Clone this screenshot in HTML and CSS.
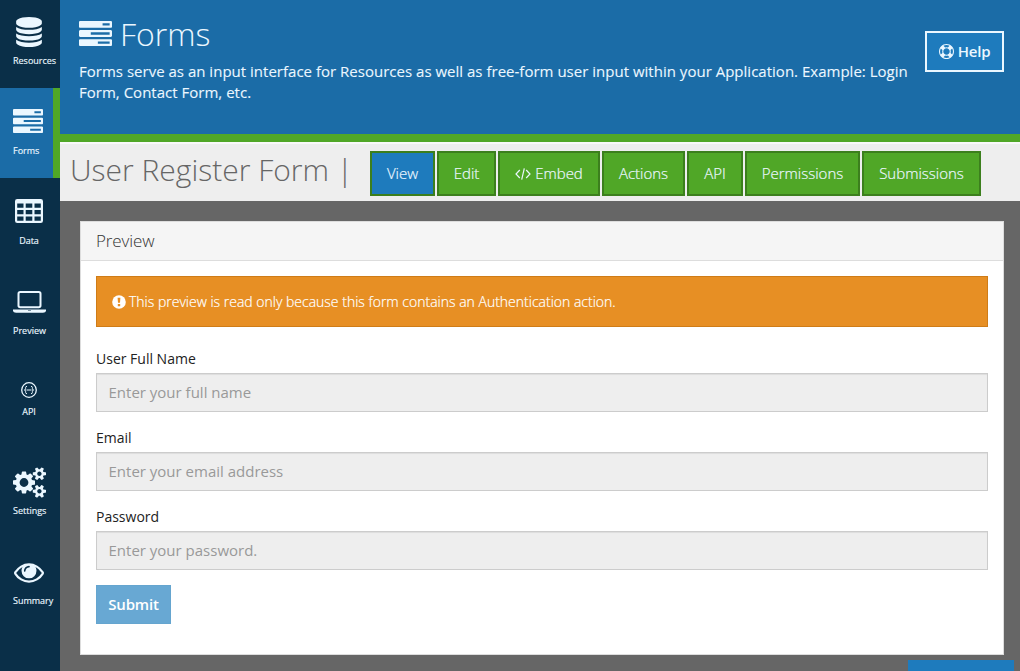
FILE: index.html
```html
<!DOCTYPE html>
<html lang="en">
<head>
<meta charset="utf-8">
<title>User Register Form</title>
<link rel="stylesheet" href="styles.css">
</head>
<body>
<svg class="defs" width="0" height="0">
  <symbol id="tasks" viewBox="0 128 1792 1408" preserveAspectRatio="none"><path d="M1024 1408h640v-128h-640v128zm-384-512h1024v-128h-1024v128zm640-512h384v-128h-384v128zm512 832v256q0 26-19 45t-45 19h-1664q-26 0-45-19t-19-45v-256q0-26 19-45t45-19h1664q26 0 45 19t19 45zm0-512v256q0 26-19 45t-45 19h-1664q-26 0-45-19t-19-45v-256q0-26 19-45t45-19h1664q26 0 45 19t19 45zm0-512v256q0 26-19 45t-45 19h-1664q-26 0-45-19t-19-45v-256q0-26 19-45t45-19h1664q26 0 45 19t19 45z"/></symbol>
</svg>
<div class="app">
  <nav class="sidebar">
    <a class="item">
      <span class="pic"><svg width="26" height="30" viewBox="0 0 1536 1792"><path d="M768 768q237 0 443-43t325-127v170q0 69-103 128t-280 93.5-385 34.5-385-34.5-280-93.5-103-128v-170q119 84 325 127t443 43zm0 768q237 0 443-43t325-127v170q0 69-103 128t-280 93.5-385 34.5-385-34.5-280-93.5-103-128v-170q119 84 325 127t443 43zm0-384q237 0 443-43t325-127v170q0 69-103 128t-280 93.5-385 34.5-385-34.5-280-93.5-103-128v-170q119 84 325 127t443 43zm0-1152q208 0 385 34.5t280 93.5 103 128v128q0 69-103 128t-280 93.5-385 34.5-385-34.5-280-93.5-103-128v-128q0-69 103-128t280-93.5 385-34.5z"/></svg></span>
      <span class="label">Resources</span>
    </a>
    <a class="item active">
      <span class="pic"><svg width="30" height="24"><use href="#tasks"/></svg></span>
      <span class="label">Forms</span>
    </a>
    <a class="item raised">
      <span class="pic"><svg width="28" height="24" viewBox="0 0 28 24"><path fill-rule="evenodd" d="M2.300 0H25.700A2.300 2.300 0 0 1 28 2.300V21.700A2.300 2.300 0 0 1 25.700 24H2.300A2.300 2.300 0 0 1 0 21.700V2.300A2.300 2.300 0 0 1 2.300 0ZM2.200 4.500V8.800H8.500V4.500ZM10.700 4.500V8.800H17.300V4.500ZM19.500 4.500V8.800H25.800V4.500ZM2.200 11V15.200H8.500V11ZM10.700 11V15.200H17.300V11ZM19.500 11V15.200H25.800V11ZM2.200 17.400V21.700H8.500V17.400ZM10.700 17.400V21.700H17.300V17.400ZM19.500 17.400V21.700H25.800V17.400Z"/></svg></span>
      <span class="label">Data</span>
    </a>
    <a class="item wide">
      <span class="pic"><svg width="33" height="22" viewBox="0 0 33 22"><path fill-rule="evenodd" d="M7.200 0H25.800A2.700 2.700 0 0 1 28.500 2.700V14.500A2.700 2.700 0 0 1 25.800 17.200H7.200A2.700 2.700 0 0 1 4.500 14.500V2.700A2.700 2.700 0 0 1 7.200 0ZM7.200 2A.7.700 0 0 0 6.500 2.700V14.500A.7.700 0 0 0 7.200 15.200H25.800A.7.700 0 0 0 26.500 14.500V2.700A.7.700 0 0 0 25.800 2ZM0 18.500H33V20Q32.600 21.800 30 21.800H3Q.4 21.800 0 20ZM15 19.500V20.100H18V19.500Z"/></svg></span>
      <span class="label">Preview</span>
    </a>
    <a class="item api">
      <span class="pic"><svg width="16" height="16" viewBox="0 0 16 16" fill="none" stroke="#ebf7ff"><circle cx="8" cy="8" r="7.300" stroke-width="1.300"/><path d="M6 4.300Q4.600 4.300 4.600 5.600V6.700Q4.600 8 3.400 8Q4.600 8 4.600 9.300V10.400Q4.600 11.700 6 11.700M10 4.300Q11.400 4.300 11.400 5.600V6.700Q11.400 8 12.600 8Q11.400 8 11.400 9.300V10.400Q11.400 11.700 10 11.700M5.500 8H10.500"/></svg></span>
      <span class="label">API</span>
    </a>
    <a class="item wide">
      <span class="pic"><svg width="33" height="31" viewBox="0 0 1920 1792"><path d="M896 896q0-106-75-181t-181-75-181 75-75 181 75 181 181 75 181-75 75-181zm768 512q0-52-38-90t-90-38-90 38-38 90q0 53 37.500 90.500t90.500 37.500 90.500-37.500 37.500-90.500zm0-1024q0-52-38-90t-90-38-90 38-38 90q0 53 37.500 90.500t90.500 37.500 90.500-37.500 37.500-90.500zm-384 421v185q0 10-7 19.500t-16 10.500l-155 24q-11 35-32 76 34 48 90 115 7 11 7 20 0 12-7 19-23 30-82.500 89.500t-78.500 59.500q-11 0-21-7l-115-90q-37 19-77 31-11 108-23 155-7 24-30 24h-186q-11 0-20-7.500t-10-17.500l-23-153q-34-10-75-31l-118 89q-7 7-20 7-11 0-21-8-144-133-144-160 0-9 7-19 10-14 41-53t47-61q-23-44-35-82l-152-24q-10-1-17-9.500t-7-19.500v-185q0-10 7-19.500t16-10.500l155-24q11-35 32-76-34-48-90-115-7-11-7-20 0-12 7-20 22-30 82-89t79-59q11 0 21 7l115 90q34-18 77-32 11-108 23-154 7-24 30-24h186q11 0 20 7.500t10 17.500l23 153q34 10 75 31l118-89q8-7 20-7 11 0 21 8 144 133 144 160 0 8-7 19-12 16-42 54t-45 60q23 48 34 82l152 23q10 2 17 10.500t7 19.500zm640 533v140q0 16-149 31-12 27-30 52 51 113 51 138 0 4-4 7-122 71-124 71-8 0-46-47t-52-68q-20 2-30 2t-30-2q-14 21-52 68t-46 47q-2 0-124-71-4-3-4-7 0-25 51-138-18-25-30-52-149-15-149-31v-140q0-16 149-31 13-29 30-52-51-113-51-138 0-4 4-7 4-2 35-20t59-34 30-16q8 0 46 46.500t52 67.500q20-2 30-2t30 2q51-71 92-112l6-2q4 0 124 70 4 3 4 7 0 25-51 138 17 23 30 52 149 15 149 31zm0-1024v140q0 16-149 31-12 27-30 52 51 113 51 138 0 4-4 7-122 71-124 71-8 0-46-47t-52-68q-20 2-30 2t-30-2q-14 21-52 68t-46 47q-2 0-124-71-4-3-4-7 0-25 51-138-18-25-30-52-149-15-149-31v-140q0-16 149-31 13-29 30-52-51-113-51-138 0-4 4-7 4-2 35-20t59-34 30-16q8 0 46 46.500t52 67.500q20-2 30-2t30 2q51-71 92-112l6-2q4 0 124 70 4 3 4 7 0 25-51 138 17 23 30 52 149 15 149 31z"/></svg></span>
      <span class="label">Settings</span>
    </a>
    <a class="item lowered">
      <span class="pic"><svg width="30" height="20" viewBox="0 384 1792 1152"><path d="M1664 960q-152-236-381-353 61 104 61 225 0 185-131.500 316.500t-316.500 131.500-316.500-131.500-131.500-316.500q0-121 61-225-229 117-381 353 133 205 333.500 326.500t434.500 121.500 434.500-121.500 333.500-326.500zm-720-384q0-20-14-34t-34-14q-125 0-214.500 89.500t-89.500 214.500q0 20 14 34t34 14 34-14 14-34q0-86 61-147t147-61q20 0 34-14t14-34zm848 384q0 34-20 69-140 230-376.500 368.500t-499.500 138.500-499.500-139-376.500-368q-20-35-20-69t20-69q140-229 376.500-368t499.500-139 499.500 139 376.500 368q20 35 20 69z"/></svg></span>
      <span class="label">Summary</span>
    </a>
  </nav>
  <main class="main">
    <header class="banner">
      <div class="intro">
        <h1 class="title"><svg class="title-icon" width="33" height="25"><use href="#tasks"/></svg><span>Forms</span></h1>
        <p class="lead">Forms serve as an input interface for Resources as well as free-form user input within your Application. Example: Login<br>Form, Contact Form, etc.</p>
      </div>
      <a class="help"><svg width="15" height="15" viewBox="0 0 1792 1792"><path d="M896 0q182 0 348 71t286 191 191 286 71 348-71 348-191 286-286 191-348 71-348-71-286-191-191-286-71-348 71-348 191-286 286-191 348-71zm0 128q-190 0-361 90l194 194q82-28 167-28t167 28l194-194q-171-90-361-90zm-678 1129l194-194q-28-82-28-167t28-167l-194-194q-90 171-90 361t90 361zm678 407q190 0 361-90l-194-194q-82 28-167 28t-167-28l-194 194q171 90 361 90zm0-384q159 0 271.500-112.500t112.500-271.500-112.500-271.500-271.500-112.500-271.500 112.500-112.500 271.500 112.500 271.500 271.500 112.500zm484-217l194 194q90-171 90-361t-90-361l-194 194q28 82 28 167t-28 167z"/></svg><span>Help</span></a>
    </header>
    <div class="toolbar">
      <h2 class="form-name">User Register Form |</h2>
      <div class="tabs">
        <a class="tab view">View</a>
        <a class="tab edit">Edit</a>
        <a class="tab embed"><svg width="16" height="12" viewBox="0 0 16 12" fill="none" stroke="#ebf7ff" stroke-width="1.200"><path d="M4.800 2L1 6L4.800 10M11.200 2L15 6L11.200 10M9.300.4L6.700 11.600"/></svg><span>Embed</span></a>
        <a class="tab actions">Actions</a>
        <a class="tab api-tab">API</a>
        <a class="tab permissions">Permissions</a>
        <a class="tab submissions">Submissions</a>
      </div>
    </div>
    <div class="content">
      <section class="panel">
        <h3 class="panel-title">Preview</h3>
        <div class="panel-body">
          <div class="alert"><svg width="14" height="14" viewBox="0 0 14 14"><circle cx="7" cy="7" r="6.800" fill="#fff"/><path fill="#e78f24" d="M5.600 2.800H8.400L8 7.800H6ZM5.800 9H8.200V11.200H5.800Z"/></svg><span>This preview is read only because this form contains an Authentication action.</span></div>
          <div class="field"><label class="caption">User Full Name</label><div class="input">Enter your full name</div></div>
          <div class="field"><label class="caption">Email</label><div class="input">Enter your email address</div></div>
          <div class="field"><label class="caption">Password</label><div class="input">Enter your password.</div></div>
          <button class="submit" disabled>Submit</button>
        </div>
      </section>
      <div class="next"></div>
    </div>
  </main>
</div>
</body>
</html>
```

FILE: styles.css
```css
* { box-sizing: border-box; }
body { margin: 0; font-family: "Open Sans", "Noto Sans", sans-serif; font-size: 15px; color: #222; }
h1, h2, h3, p { margin: 0; font-weight: 300; }
svg { display: block; flex: none; }
.defs { height: 0; }
.app { display: flex; height: 671px; overflow: hidden; }

.sidebar { width: 60px; flex: none; background: #0a2f48; fill: #ebf7ff; color: #ebf7ff; margin-top: -2px; }
.item { display: block; height: 90px; padding: 17px 15px 0 13px; }
.item.wide { padding-right: 14px; }
.item.active { background: #1b6ca7; border-right: 7px solid #50a727; }
.pic { display: flex; height: 34px; align-items: center; justify-content: center; }
.active .pic { justify-content: flex-start; }
.active .pic, .raised .pic { padding-bottom: 2px; }
.lowered .pic { padding-top: 2px; }
.label { display: block; margin-top: 5px; font-size: 9px; line-height: 14px; font-weight: 500; text-align: center; white-space: nowrap; -webkit-text-stroke: .15px; }
.item.api { padding-top: 15px; }
.api .label { margin-top: -2px; }

.main { flex: 1; min-width: 0; display: flex; flex-direction: column; }
.banner { display: flex; justify-content: space-between; height: 142px; padding: 14px 16px 0 19px; background: #1b6ca7; border-bottom: 8px solid #50a727; color: #ebf7ff; flex: none; }
.intro { white-space: nowrap; }
.title { display: flex; align-items: center; gap: 8px; height: 41px; padding-bottom: 2px; font-size: 32px; line-height: 39px; }
.title-icon { fill: #ebf7ff; }
.lead { margin-top: 6px; font-size: 15px; line-height: 21px; font-weight: 400; letter-spacing: .012px; -webkit-text-stroke: .1px; }
.help { display: flex; align-items: center; justify-content: center; gap: 4px; width: 79px; height: 41px; margin-top: 17px; padding-bottom: 1px; border: 2px solid #ebf7ff; background: #1e7bbd; fill: #ebf7ff; font-size: 15px; font-weight: 600; letter-spacing: -.2px; flex: none; }
.help span { padding-bottom: 1px; }

.toolbar { display: flex; flex: none; height: 59px; padding: 7px 0 0 10px; border-top: 2px solid #f9f9f9; background: #eee; }
.form-name { width: 300px; flex: none; font-size: 30px; line-height: 38px; color: #666; white-space: nowrap; }
.tabs { display: flex; gap: 2px; }
.tab { display: flex; align-items: center; justify-content: center; gap: 4px; height: 45px; padding-bottom: 2px; border: 2px solid #3c7f1d; background: #50a727; color: #ebf7ff; font-size: 15px; font-weight: 300; white-space: nowrap; -webkit-text-stroke: .2px; }
.tab svg { margin-top: 2px; }
.view { width: 65px; background: #1e7bbd; }
.edit { width: 59px; }
.embed { width: 102px; }
.actions { width: 83px; }
.api-tab { width: 56px; }
.permissions { width: 115px; }
.submissions { width: 119px; }

.content { flex: 1; padding: 20px 16px 0 20px; background: #666; }
.panel { height: 434px; border: 1px solid #ddd; background: #fff; }
.panel-title { height: 39px; padding-left: 15px; border-bottom: 1px solid #ddd; background: #f5f5f5; font-size: 17px; letter-spacing: -.1px; line-height: 38px; color: #333; }
.panel-body { padding: 15px; }
.alert { display: flex; align-items: center; gap: 3px; height: 51px; margin-bottom: 21px; padding-left: 15px; border: 1px solid #cf7c17; background: #e78f24; color: #fff; font-size: 14px; font-weight: 300; -webkit-text-stroke: .2px; }
.field { margin-bottom: 15px; }
.caption { display: block; height: 25px; font-size: 14px; line-height: 22px; }
.input { height: 39px; padding-left: 11.5px; border: 1px solid #ccc; background: #eee; box-shadow: inset 0 1px 1px rgba(0,0,0,.075); color: #999; font-size: 15px; line-height: 37px; }
.submit { display: block; width: 75px; height: 38.5px; padding: 0 0 1px; border: 1px solid #65a5cf; background: #68a8d3; color: #fff; font: 600 15px "Open Sans", sans-serif; letter-spacing: -.15px; }
.next { width: 106px; height: 40px; margin: 5px -10px 0 auto; background: #1e7bbd; }
```
